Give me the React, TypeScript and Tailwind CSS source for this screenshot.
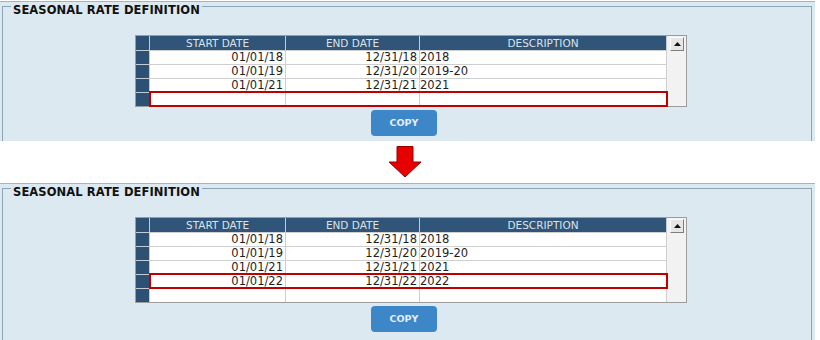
const font = "font-['DejaVu_Sans',sans-serif]";

const before = [
  ["01/01/18", "12/31/18", "2018"],
  ["01/01/19", "12/31/20", "2019-20"],
  ["01/01/21", "12/31/21", "2021"],
  ["", "", ""],
];

const after = [
  ["01/01/18", "12/31/18", "2018"],
  ["01/01/19", "12/31/20", "2019-20"],
  ["01/01/21", "12/31/21", "2021"],
  ["01/01/22", "12/31/22", "2022"],
  ["", "", ""],
];

function Grid({ rows, red }: { rows: string[][]; red: number }) {
  return (
    <div className="ml-[132px] mt-[19px] flex w-[552px] border border-[#9c9c9c] bg-white">
      <div className="flex flex-col">
        {/* header */}
        <div className="flex h-[14px]">
          <div className="w-[14px] border-r border-[#c3ccd5] bg-[#2d5174]" />
          <div className="w-[136px] border-r border-[#c3ccd5] bg-[#305578] text-center text-[10.5px] leading-[14px] text-[#dbe3ea]">
            START DATE
          </div>
          <div className="w-[134px] border-r border-[#c3ccd5] bg-[#305578] text-center text-[10.5px] leading-[14px] text-[#dbe3ea]">
            END DATE
          </div>
          <div className="w-[247px] border-r border-[#c3ccd5] bg-[#305578] text-center text-[10.5px] leading-[14px] text-[#dbe3ea]">
            DESCRIPTION
          </div>
        </div>

        {rows.map((r, i) => (
          <div key={i} className="flex h-[14px]">
            <div className="w-[14px] border-r border-t border-[#c3ccd5] bg-[#2d5174]" />
            <div
              className={
                i === red
                  ? "relative z-10 flex outline-2 outline-solid outline-[#c00000] -outline-offset-1"
                  : "flex"
              }
            >
              <div className="w-[136px] truncate border-r border-t border-[#cfcfcf] pr-[2px] text-right text-[11.5px] leading-[13px] text-[#1e1e1e]">
                {r[0]}
              </div>
              <div className="w-[134px] truncate border-r border-t border-[#cfcfcf] pr-[2px] text-right text-[11.5px] leading-[13px] text-[#1e1e1e]">
                {r[1]}
              </div>
              <div className="w-[247px] truncate border-r border-t border-[#cfcfcf] text-left text-[11.5px] leading-[13px] text-[#1e1e1e]">
                {r[2]}
              </div>
            </div>
          </div>
        ))}
      </div>

      {/* scrollbar */}
      <div className="w-[19px] bg-[#f2f2f2] pl-[3px] pt-px">
        <div className="flex h-[14px] w-[14px] items-center justify-center border border-b-[#7d7d7d] border-l-[#fafafa] border-r-[#7d7d7d] border-t-[#fafafa] bg-[#e6e6e6]">
          <svg width="7" height="4" viewBox="0 0 7 4">
            <polygon points="0,4 3.5,0 7,4" fill="#111" />
          </svg>
        </div>
      </div>
    </div>
  );
}

function Panel({ rows, red, h }: { rows: string[][]; red: number; h: string }) {
  return (
    <section className={`w-[815px] overflow-hidden border-t border-[#a8b2bb] bg-[#dde9f1] ${h}`}>
      <div className="ml-[2px] mr-[3px] mt-[4px] h-full border-l border-r border-[#8ea4b7]">
        <div className="flex items-start">
          <div className="w-[8px] border-t border-[#8ea4b7]" />
          <span className="-mt-[2px] px-[2px] text-[11.5px] font-bold leading-[12px] tracking-[0.1px] text-[#111]">
            SEASONAL RATE DEFINITION
          </span>
          <div className="flex-1 border-t border-[#8ea4b7]" />
        </div>

        <Grid rows={rows} red={red} />

        <button className="ml-[368px] mt-[3px] h-[26px] w-[66px] rounded-[4px] bg-[#3d87c9] text-[9.5px] font-bold text-[#e6eef7]">
          COPY
        </button>
      </div>
    </section>
  );
}

export default function App() {
  return (
    <div className={`h-[340px] w-[820px] overflow-hidden bg-white ${font}`}>
      <div className="pt-px">
        <Panel rows={before} red={3} h="h-[140px]" />
      </div>

      <div className="h-[42px] pl-[388px] pt-[5px]">
        <svg width="34" height="32" viewBox="0 0 34 32">
          <polygon
            points="9,0.5 25,0.5 25,16 33,16 17,31 1,16 9,16"
            fill="#e60000"
            stroke="#9b0000"
            strokeWidth="1"
          />
        </svg>
      </div>

      <Panel rows={after} red={3} h="h-[157px]" />
    </div>
  );
}
